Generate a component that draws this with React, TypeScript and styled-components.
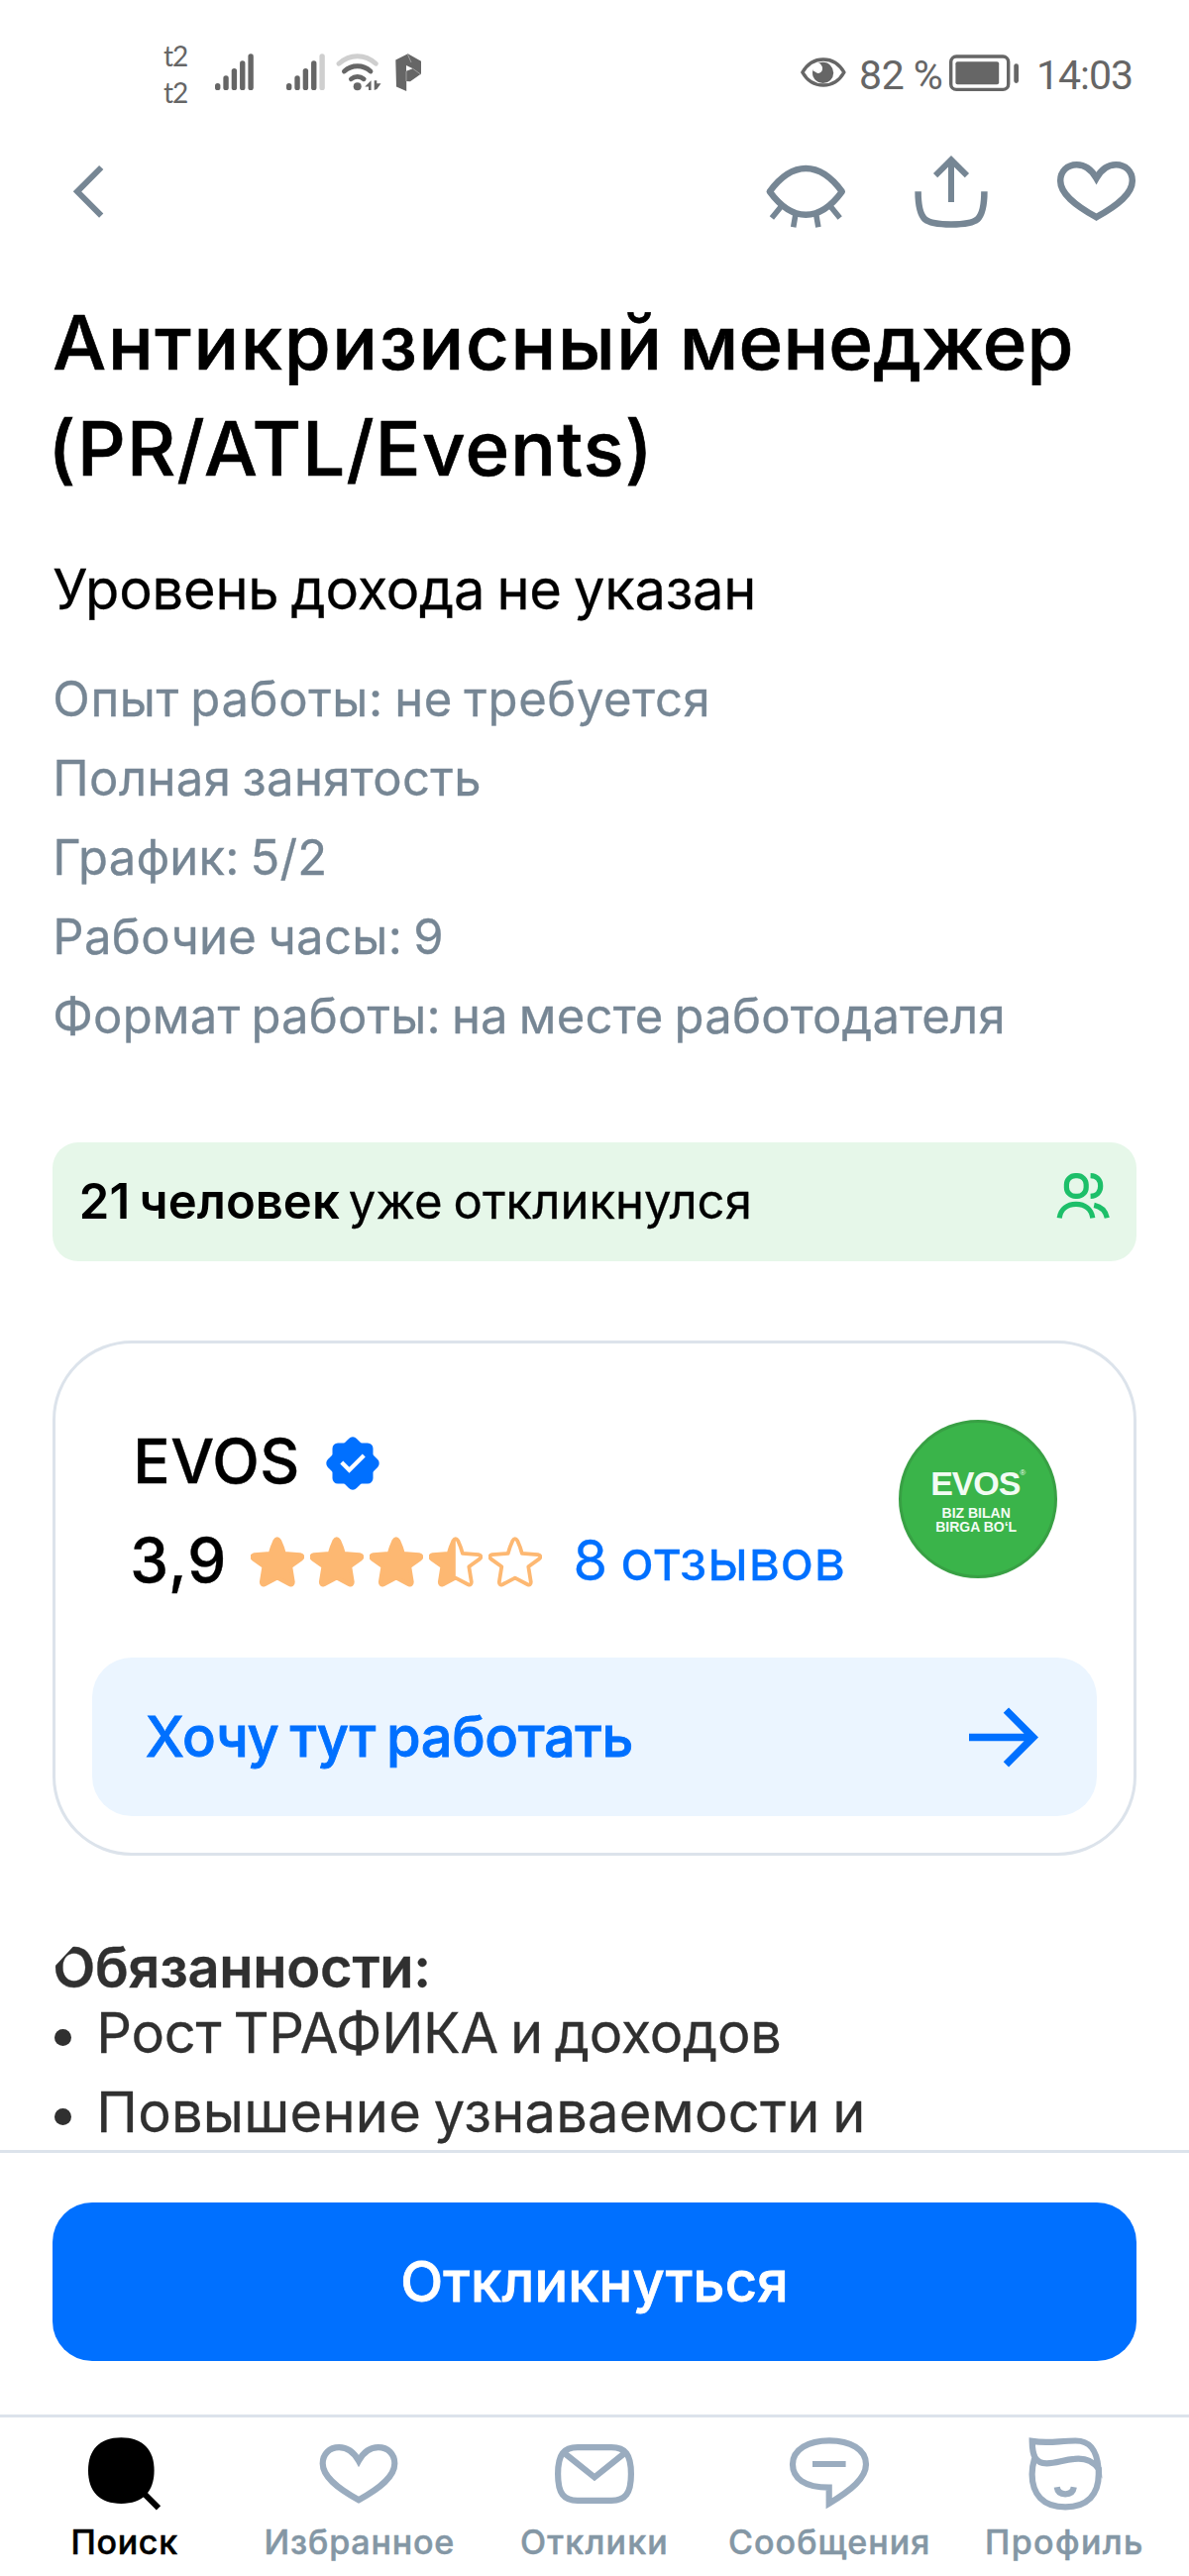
import React from 'react';
import styled, { createGlobalStyle, css } from 'styled-components';

const colors = {
  text: '#000000',
  secondary: '#768694',
  body: '#303030',
  accent: '#0070ff',
  accentSoft: '#ebf5ff',
  border: '#dce3eb',
  success: '#1dbf69',
  successSoft: '#e6f7e9',
  star: '#fdb872',
  navIcon: '#9aacbf',
  navLabel: '#8497a5',
  status: '#666666',
  statusDim: '#cfcfcf',
};

const GlobalStyle = createGlobalStyle`
  *, *::before, *::after { box-sizing: border-box; }
  body { margin: 0; background: #ffffff; }
  svg { display: block; flex: none; }
  button { border: 0; background: none; padding: 0; margin: 0; font: inherit; }
`;

const Screen = styled.div`
  width: 1200px;
  height: 2600px;
  display: flex;
  flex-direction: column;
  overflow: hidden;
  background: #ffffff;
  color: ${colors.text};
  font-family: Inter, 'Liberation Sans', sans-serif;
  font-kerning: normal;
`;

/* ---------- text ---------- */

type TextProps = {
  $size: number;
  $weight?: number;
  $line?: number;
  $track?: number;
  $color?: string;
  $grade?: number;
};

/* $grade thickens the strokes between two static weights of the family */
const textStyle = css<TextProps>`
  font-size: ${(p) => p.$size}px;
  font-weight: ${(p) => p.$weight ?? 400};
  line-height: ${(p) => p.$line ?? 80}px;
  letter-spacing: ${(p) => p.$track ?? 0}px;
  word-spacing: -0.06em;
  color: ${(p) => p.$color ?? 'inherit'};
  -webkit-text-stroke-width: ${(p) => p.$grade ?? 0.3}px;
  white-space: nowrap;
`;

const Label = styled.span<TextProps>`
  ${textStyle}
`;

/* ---------- status bar ---------- */

const StatusBar = styled.header`
  height: 146px;
  flex: none;
  display: flex;
  align-items: center;
  justify-content: space-between;
  padding: 0 57px 0 165px;
  color: ${colors.status};
`;

const StatusGroup = styled.div`
  display: flex;
  align-items: center;
`;

const Operators = styled.div`
  width: 52px;
  padding-top: 3px;
  font: 400 28px/36.4px Lato, sans-serif;
  letter-spacing: -1px;
`;

const SignalIcon = styled.svg`
  margin-right: 33px;
`;

const WifiIcon = styled.svg`
  margin: 0 13px 0 -22px;
`;

const StatusText = styled.span<{ $gapLeft: number; $gapRight: number; $track: number }>`
  font: 400 41px/48px Roboto, sans-serif;
  padding-top: 5px;
  margin: 0 ${(p) => p.$gapRight}px 0 ${(p) => p.$gapLeft}px;
  letter-spacing: ${(p) => p.$track}px;
  white-space: nowrap;
`;

function Signal({ dimLast = false }: { dimLast?: boolean }) {
  const tops = [29.7, 22, 14.7, 7, 0];
  return (
    <SignalIcon width="39" height="38" viewBox="0 0 39 38">
      {tops.map((top, i) => (
        <rect
          key={top}
          x={i * 8.35}
          y={top + 0.3}
          width="5.4"
          height={36.8 - top}
          rx="2.6"
          fill={dimLast && i === 4 ? colors.statusDim : colors.status}
        />
      ))}
    </SignalIcon>
  );
}

function Wifi() {
  return (
    <WifiIcon width="47" height="38" viewBox="0 0 47 38" fill="none" strokeWidth="4.8" strokeLinecap="round">
      <path d="M3 10.3C14 0.2 29.5 0.2 40.3 10.3" stroke={colors.statusDim} />
      <path d="M8.4 18C16 11 27.5 11 35 18" stroke={colors.status} />
      <path d="M15.4 25.8C19 22.6 24.4 22.6 28.2 25.8" stroke={colors.status} />
      <circle cx="21.7" cy="33.3" r="4" fill={colors.status} />
      <path d="M29.3 33.5L35.6 27.3V37H33V33.5Z" fill={colors.status} />
      <path d="M38.7 27.3H41.3V30.2H45.5L41.3 36L38.7 37Z" fill={colors.status} />
    </WifiIcon>
  );
}

function PaperMark() {
  return (
    <svg width="27" height="38" viewBox="0 0 27 38">
      <path d="M0.3 6.5L12.7 0.3L26 7.7V20.5L15 28.3L11.2 28V38L1 33.5Z" fill={colors.status} />
      <path d="M11 12L17.7 15.3L11 17.8Z" fill="#fff" />
      <path d="M12.5 1L16 9M17.7 15.3L25.5 21M11 18V28" stroke="#a5a5a5" strokeWidth="0.9" fill="none" />
    </svg>
  );
}

function EyeComfort() {
  return (
    <svg width="46" height="30" viewBox="0 0 46 30" fill="none">
      <path
        d="M1.9 15C7 6 14.5 1.9 22.9 1.9S38.8 6 43.9 15C38.8 24 31.3 28.1 22.9 28.1S7 24 1.9 15Z"
        stroke={colors.status}
        strokeWidth="3.5"
        strokeLinejoin="round"
      />
      <circle cx="22.6" cy="15.4" r="10.6" fill={colors.status} />
      <path d="M12 10.5C14 6 19 4 20.5 7.2C23.4 10 22.3 15.4 18 15.9C15.5 16.1 14.6 14 12.6 13.6Z" fill="#fff" />
    </svg>
  );
}

function Battery() {
  return (
    <svg width="72" height="39" viewBox="0 0 72 39">
      <rect x="2.7" y="3" width="58" height="33.4" rx="5.5" fill="none" stroke={colors.status} strokeWidth="3.4" />
      <rect x="7.4" y="8.3" width="43.8" height="22.9" rx="2" fill={colors.status} />
      <rect x="66.3" y="10.3" width="4.7" height="19.6" rx="2.3" fill={colors.status} />
    </svg>
  );
}

/* ---------- top bar ---------- */

const TopBar = styled.nav`
  height: 92px;
  flex: none;
  display: flex;
  align-items: center;
  justify-content: space-between;
  padding: 0 52px 0 70px;
`;

const Actions = styled.div`
  display: flex;
  align-items: center;
`;

const IconButton = styled.button<{ $gap?: number }>`
  margin-left: ${(p) => p.$gap ?? 0}px;
`;

const stroke = { fill: 'none', stroke: colors.secondary, strokeWidth: 6.5 } as const;

const HEART =
  'M40.5 17.8C35.5 8.8 28 4.2 20.7 4.2C11 4.2 4.2 11 4.2 20.5C4.2 33.5 18.5 45 40.5 57.2C62.5 45 76.8 33.5 76.8 20.5C76.8 11 70 4.2 60.3 4.2C53 4.2 45.5 8.8 40.5 17.8Z';

function BackIcon() {
  return (
    <svg width="38" height="84" viewBox="0 -13 38 84" {...stroke}>
      <path d="M32.2 6L8 30.3L32.2 54.6" strokeWidth="6" />
    </svg>
  );
}

function HideIcon() {
  return (
    <svg width="86" height="84" viewBox="0 -10 86 84" {...stroke}>
      <path
        d="M6.8 33.3C16.5 20 29 9.9 43.3 9.9S70.1 20 79.8 33.3C70.1 46.6 57.6 56.7 43.3 56.7S16.5 46.6 6.8 33.3Z"
        strokeLinejoin="round"
      />
      <path d="M19.3 47.3L8.9 60M32.9 56.5L30.7 69.3M53.7 56.5L55.9 69.3M67.3 47.3L77.7 60" strokeWidth="5.6" />
    </svg>
  );
}

function ShareIcon() {
  return (
    <svg width="80" height="84" viewBox="0 0 80 84" {...stroke}>
      <path d="M6.6 43.3C6.6 58 8.3 66.4 13.5 71.3C18.5 75.6 27 76.5 40 76.5S61.5 75.6 66.5 71.3C71.7 66.4 73.4 58 73.4 43.3" />
      <path d="M40 54V12M24.1 27.2L40 11.3L55.9 27.2" strokeWidth="6" />
    </svg>
  );
}

function HeartIcon() {
  return (
    <svg width="82" height="84" viewBox="0 -12 82 84" {...stroke}>
      <path d={HEART} />
    </svg>
  );
}

/* ---------- vacancy ---------- */

const Main = styled.main`
  flex: 1;
  min-height: 0;
  overflow: hidden;
  padding: 54px 53.33px 0;
`;

const Title = styled.h1`
  margin: 0;
  display: flex;
  flex-direction: column;
`;

const WideWord = styled.span`
  letter-spacing: 1.67px;
`;

const OutdentedLabel = styled(Label)`
  margin-left: -5px;
`;

const Salary = styled.p<TextProps>`
  ${textStyle}
  margin: 49.3px 0 30.9px;
`;

const Conditions = styled.div`
  display: flex;
  flex-direction: column;
`;

const Banner = styled.div`
  height: 120px;
  margin-top: 87.8px;
  padding: 0 24.7px 0 26.5px;
  border-radius: 26px;
  background: ${colors.successSoft};
  display: flex;
  align-items: center;
  gap: 9px;
`;

const BannerIcon = styled.svg`
  margin: 0 0 13px auto;
`;

const Card = styled.section`
  height: 520px;
  margin-top: 80px;
  border: 3px solid ${colors.border};
  border-radius: 80px;
  padding: 68.7px 37px 0;
`;

const CardHeader = styled.div`
  display: flex;
  justify-content: space-between;
  padding: 0 40px 0 38px;
`;

const CompanyRow = styled.div<{ $indent: number }>`
  height: 100px;
  display: flex;
  align-items: center;
  padding-left: ${(p) => p.$indent}px;
`;

const Badge = styled.svg`
  margin: 3px 0 0 26px;
`;

const Stars = styled.div`
  display: flex;
  gap: 6px;
  margin: 3px 31px 0 24px;
`;

const Logo = styled.div`
  width: 160px;
  height: 160px;
  margin-top: 8.3px;
  padding-top: 42px;
  border: 3px solid #38a044;
  border-radius: 50%;
  background: #3ab44a;
  color: #f2fbf3;
  display: flex;
  flex-direction: column;
  align-items: center;
  font-family: 'Liberation Sans', Arial, sans-serif;
  font-weight: 700;
  white-space: nowrap;
`;

const LogoName = styled.div`
  display: flex;
  margin-bottom: 4px;
  font-size: 34px;
  line-height: 38px;
  letter-spacing: -1.1px;
`;

const Registered = styled.span`
  font-size: 8px;
  line-height: 17px;
  font-weight: 400;
`;

const LogoLine = styled.div`
  font-size: 14px;
  line-height: 14px;
  margin-right: 3px;
`;

const WantToWork = styled.button`
  width: 100%;
  height: 160px;
  margin-top: 48.3px;
  padding: 0 57.7px 0 53.5px;
  border-radius: 40px;
  background: ${colors.accentSoft};
  color: ${colors.accent};
  display: flex;
  align-items: center;
  justify-content: space-between;
`;

/* The initial letter of the section title has a bevelled upper-left shoulder */
const SectionTitle = styled.h2<TextProps>`
  ${textStyle}
  margin: 86.3px 0 0;
  clip-path: polygon(27px -2px, 100% -2px, 100% 120%, 0 120%, 0 27px);
`;

const Duties = styled.ul`
  margin: 0;
  padding: 0;
  list-style: none;
`;

const Duty = styled.li`
  display: flex;
  align-items: center;
  color: ${colors.body};

  &::before {
    content: '';
    width: 17px;
    height: 17px;
    margin: 9px 25px 0 2px;
    border-radius: 50%;
    background: ${colors.body};
  }
`;

const STAR =
  'M24.3 4.2Q26.8 0.2 29.3 4.2Q32 10 33.9 16.9L49.8 18.2Q54.4 19.4 50.9 22.6L40.3 30.2L42.8 45.8Q42.7 49.6 39.4 48.2L26.8 41.6L14.2 48.2Q10.9 49.6 10.8 45.8L13.3 30.2L2.7 22.6Q-0.8 19.4 3.8 18.2L19.7 16.9Q21.6 10 24.3 4.2Z';

function Star({ fill }: { fill: 'full' | 'half' | 'none' }) {
  return (
    <svg width="54" height="51" viewBox="0 0 54 51">
      {fill === 'half' && (
        <clipPath id="star-half">
          <rect x="0" y="0" width="26.8" height="51" />
        </clipPath>
      )}
      <path
        d={STAR}
        fill={fill === 'full' ? colors.star : 'none'}
        stroke={colors.star}
        strokeWidth="3.8"
        strokeLinejoin="round"
      />
      {fill === 'half' && <path d={STAR} fill={colors.star} clipPath="url(#star-half)" />}
    </svg>
  );
}

function VerifiedBadge() {
  return (
    <Badge width="54" height="54" viewBox="-27 -27 54 54">
      <rect x="-20.5" y="-20.5" width="41" height="41" rx="5.5" fill={colors.accent} />
      <rect x="-20.5" y="-20.5" width="41" height="41" rx="5.5" fill={colors.accent} transform="rotate(45)" />
      <path d="M-11.2 -1L-3.5 6.7L11.3 -8" fill="none" stroke="#fff" strokeWidth="4.2" />
    </Badge>
  );
}

function PeopleIcon() {
  return (
    <BannerIcon width="56" height="47" viewBox="0 0 56 47" fill="none" stroke={colors.success} strokeWidth="5.2">
      <rect x="10.4" y="3.6" width="19.8" height="20.8" rx="9" />
      <path d="M34.6 3.6C41 3.8 44.7 8 44.7 14S41 24.2 34.6 24.4" />
      <path d="M3.2 46.3C4.5 37.5 11 32.4 20 32.4S35.5 37.5 36.8 46.3" />
      <path d="M38.2 33.4C46 35 50 40 51.3 46.3" />
    </BannerIcon>
  );
}

function ArrowIcon() {
  return (
    <svg width="71" height="67" viewBox="0 0 71 67" fill="none" stroke={colors.accent} strokeWidth="7.5">
      <path d="M0 33.5H66M37.4 6.2L64.7 33.5L37.4 60.8" />
    </svg>
  );
}

/* ---------- footer ---------- */

const ApplyBar = styled.div`
  height: 266.7px;
  flex: none;
  padding: 50px 53.33px 0;
  border-top: 3px solid ${colors.border};
  background: #ffffff;
`;

const ApplyButton = styled.button`
  width: 100%;
  height: 160px;
  border-radius: 40px;
  background: ${colors.accent};
  color: #ffffff;
`;

const TabBar = styled.nav`
  height: 163.3px;
  flex: none;
  display: flex;
  padding: 0 7px;
  border-top: 3px solid ${colors.border};
  background: #ffffff;
`;

const Tab = styled.a<{ $active?: boolean }>`
  flex: 1 1 0;
  min-width: 0;
  padding-top: 17px;
  display: flex;
  flex-direction: column;
  align-items: center;
  gap: 9.6px;
  color: ${(p) => (p.$active ? colors.text : colors.navLabel)};
`;

const TabIcon = ({ children }: { children: React.ReactNode }) => (
  <svg width="82" height="80" viewBox="0 0 82 80" fill="none" stroke={colors.navIcon} strokeWidth="6.2">
    {children}
  </svg>
);

const tabs = [
  {
    label: 'Поиск',
    track: 0.7,
    active: true,
    icon: (
      <g transform="translate(4 3.3)" stroke="none">
        <path d="M33.3 0C55 0 66.6 12 66.6 33.3S55 66.7 33.3 66.7 0 54.6 0 33.3 11.6 0 33.3 0Z" fill="#000" />
        <path d="M54 54L71 71" stroke="#000" strokeWidth="6" />
      </g>
    ),
  },
  {
    label: 'Избранное',
    track: 0.8,
    icon: <path d={HEART} transform="translate(-0.5 9)" />,
  },
  {
    label: 'Отклики',
    track: 1.2,
    icon: (
      <g transform="translate(1 10)">
        <path d="M23 3.1H57C71 3.1 76.9 10 76.9 30S71 56.9 57 56.9H23C9 56.9 3.1 50 3.1 30S9 3.1 23 3.1Z" />
        <path d="M9 8.5L40 33.3L71 8.5" />
      </g>
    ),
  },
  {
    label: 'Сообщения',
    track: 1.02,
    icon: (
      <g transform="translate(1 3.3)">
        <path d="M39.7 50.4V66.5C62 53 77 41 77 27C77 12 61 3.1 40 3.1S3 12 3 27C3 41 15 50.4 39.7 50.4Z" />
        <path d="M23 26.7H56.6" />
      </g>
    ),
  },
  {
    label: 'Профиль',
    track: 1.4,
    icon: (
      <g transform="translate(5.5 3.3)">
        <path d="M3.2 3.6C20 6.5 30 3.2 47 3.2C62 3.2 68.5 13 70 31C64 23 55 20.5 46 21.5C34 22.5 28 26 18 26C6 26 3.4 18 3.2 3.6Z" />
        <path d="M5.6 21C3.5 28 3.1 32 3.1 37C3.1 57 14 70 36.7 70S70.3 57 70.3 37V30" />
        <path d="M28.2 50C28.8 54.3 31.5 57 36.7 57S44.7 54.3 45.3 50" />
      </g>
    ),
  },
];

const conditions: [string, number][] = [
  ['Опыт работы: не требуется', 0.6],
  ['Полная занятость', 0.38],
  ['График: 5/2', 0.16],
  ['Рабочие часы: 9', 0.34],
  ['Формат работы: на месте работодателя', 0.18],
];

const duties: [string, number][] = [
  ['Рост ТРАФИКА и доходов', -0.28],
  ['Повышение узнаваемости и', 0.23],
];

export default function App() {
  return (
    <>
      <GlobalStyle />
      <Screen>
        <StatusBar>
          <StatusGroup>
            <Operators>
              <div>t2</div>
              <div>t2</div>
            </Operators>
            <Signal />
            <Signal dimLast />
            <Wifi />
            <PaperMark />
          </StatusGroup>
          <StatusGroup>
            <EyeComfort />
            <StatusText $gapLeft={13} $gapRight={6} $track={-0.5}>82 %</StatusText>
            <Battery />
            <StatusText $gapLeft={16.5} $gapRight={0} $track={-1}>14:03</StatusText>
          </StatusGroup>
        </StatusBar>

        <TopBar>
          <IconButton aria-label="Назад"><BackIcon /></IconButton>
          <Actions>
            <IconButton aria-label="Скрыть"><HideIcon /></IconButton>
            <IconButton aria-label="Поделиться" $gap={64}><ShareIcon /></IconButton>
            <IconButton aria-label="В избранное" $gap={66}><HeartIcon /></IconButton>
          </Actions>
        </TopBar>

        <Main>
          <Title>
            <Label $size={76} $weight={500} $line={106.67} $track={0.24} $grade={0.7}>
              <WideWord>Антикризисный</WideWord> менеджер
            </Label>
            <OutdentedLabel $size={76} $weight={500} $line={106.67} $track={1.23} $grade={0.7}>
              (PR/ATL/Events)
            </OutdentedLabel>
          </Title>
          <Salary $size={56} $track={-0.21}>Уровень дохода не указан</Salary>
          <Conditions>
            {conditions.map(([text, track]) => (
              <Label key={text} $size={49} $track={track} $color={colors.secondary}>{text}</Label>
            ))}
          </Conditions>

          <Banner>
            <Label $size={49} $weight={600} $track={0.04} $grade={0}>21 человек</Label>
            <Label $size={49} $track={0.04}>уже откликнулся</Label>
            <PeopleIcon />
          </Banner>

          <Card>
            <CardHeader>
              <div>
                <CompanyRow $indent={3}>
                  <Label $size={62} $weight={500} $track={0.45} $grade={0.4}>EVOS</Label>
                  <VerifiedBadge />
                </CompanyRow>
                <CompanyRow $indent={0}>
                  <Label $size={62} $weight={500} $track={1.1} $grade={0.4}>3,9</Label>
                  <Stars>
                    <Star fill="full" />
                    <Star fill="full" />
                    <Star fill="full" />
                    <Star fill="half" />
                    <Star fill="none" />
                  </Stars>
                  <Label $size={56} $track={0.4} $color={colors.accent}>8 отзывов</Label>
                </CompanyRow>
              </div>
              <Logo>
                <LogoName>EVOS<Registered>®</Registered></LogoName>
                <LogoLine>BIZ BILAN</LogoLine>
                <LogoLine>BIRGA BO‘L</LogoLine>
              </Logo>
            </CardHeader>
            <WantToWork>
              <Label $size={56} $weight={500} $track={-0.42} $grade={0.8}>Хочу тут работать</Label>
              <ArrowIcon />
            </WantToWork>
          </Card>

          <SectionTitle $size={56} $weight={600} $line={52} $track={-0.31} $color={colors.body}>
            Обязанности:
          </SectionTitle>
          <Duties>
            {duties.map(([text, track]) => (
              <Duty key={text}>
                <Label $size={56} $track={track}>{text}</Label>
              </Duty>
            ))}
          </Duties>
        </Main>

        <ApplyBar>
          <ApplyButton>
            <Label $size={56} $weight={500} $track={0.2} $grade={0.8}>Откликнуться</Label>
          </ApplyButton>
        </ApplyBar>

        <TabBar>
          {tabs.map((tab) => (
            <Tab key={tab.label} $active={tab.active}>
              <TabIcon>{tab.icon}</TabIcon>
              <Label $size={34} $weight={500} $line={40} $track={tab.track} $grade={0.5}>{tab.label}</Label>
            </Tab>
          ))}
        </TabBar>
      </Screen>
    </>
  );
}
